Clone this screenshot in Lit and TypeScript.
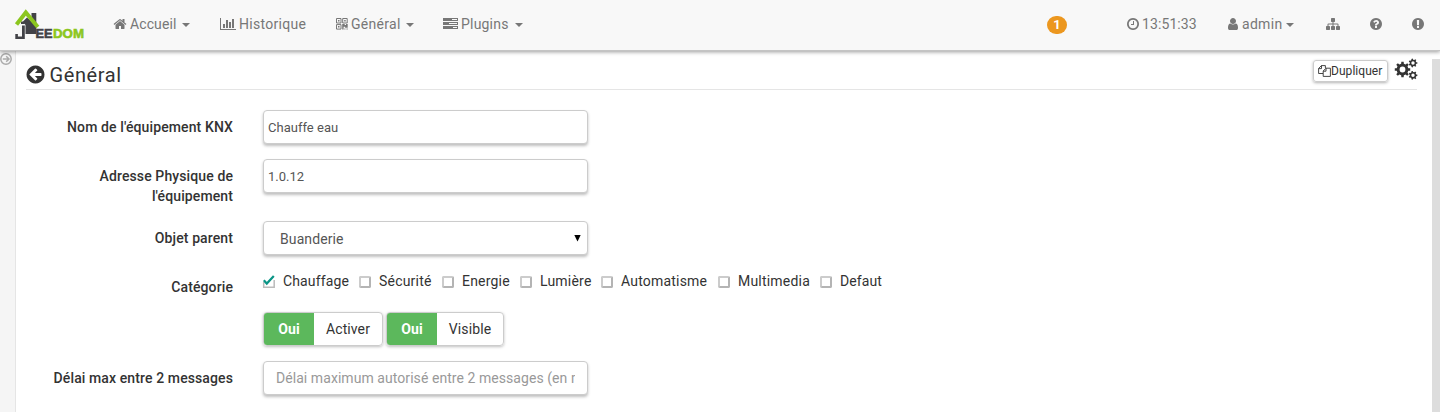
import { LitElement, html, css, svg } from "lit";
import { customElement } from "lit/decorators.js";

const DISC = "M1664 896q0 209-103 385.5t-279.5 279.5-385.5 103-385.5-103-279.5-279.5-103-385.5 103-385.5 279.5-279.5 385.5-103 385.5 103 279.5 279.5 103 385.5z";
const PATHS: Record<string, string> = {
  home: "M1472 992v480q0 26-19 45t-45 19h-384v-384h-256v384h-384q-26 0-45-19t-19-45v-480q0-1 .5-3t.5-3l575-474 575 474q1 2 1 6zm223-69l-62 74q-8 9-21 11h-3q-13 0-21-7l-692-577-692 577q-12 8-24 7-13-2-21-11l-62-74q-8-10-7-23.5t11-21.5l719-599q32-26 76-26t76 26l244 204v-195q0-14 9-23t23-9h192q14 0 23 9t9 23v408l219 182q10 8 11 21.5t-7 23.5z",
  chart: "M640 896v512h-256v-512h256zm384-512v1024h-256v-1024h256zm1024 1152v128h-2048v-1536h128v1408h1920zm-640-896v768h-256v-768h256zm384-384v1152h-256v-1152h256z",
  back: "M1408 960v-128q0-26-19-45t-45-19h-502l189-189q19-19 19-45t-19-45l-91-91q-18-18-45-18t-45 18l-362 362-91 91q-18 18-18 45t18 45l91 91 362 362q18 18 45 18t45-18l91-91q18-18 18-45t-18-45l-189-189h502q26 0 45-19t19-45z" + DISC,
  clock: "M1024 544v448q0 14-9 23t-23 9h-320q-14 0-23-9t-9-23v-64q0-14 9-23t23-9h224v-352q0-14 9-23t23-9h64q14 0 23 9t9 23zM1440 896q0-148-73-273t-198-198-273-73-273 73-198 198-73 273 73 273 198 198 273 73 273-73 198-198 73-273z" + DISC,
  user: "M1536 1399q0 109-62.5 187t-150.5 78h-854q-88 0-150.5-78t-62.5-187q0-85 8.5-160.5t31.5-152 58.5-131 94-89 134.5-34.5q131 128 313 128t313-128q76 0 134.5 34.5t94 89 58.5 131 31.5 152 8.5 160.5zm-256-887q0 159-112.5 271.5t-271.5 112.5-271.5-112.5-112.5-271.5 112.5-271.5 271.5-112.5 271.5 112.5 112.5 271.5z",
  sitemap: "M1792 1248v320q0 40-28 68t-68 28h-320q-40 0-68-28t-28-68v-320q0-40 28-68t68-28h96v-192h-512v192h96q40 0 68 28t28 68v320q0 40-28 68t-68 28h-320q-40 0-68-28t-28-68v-320q0-40 28-68t68-28h96v-192h-512v192h96q40 0 68 28t28 68v320q0 40-28 68t-68 28h-320q-40 0-68-28t-28-68v-320q0-40 28-68t68-28h96v-192q0-52 38-90t90-38h512v-192h-96q-40 0-68-28t-28-68v-320q0-40 28-68t68-28h320q40 0 68 28t28 68v320q0 40-28 68t-68 28h-96v192h512q52 0 90 38t38 90v192h96q40 0 68 28t28 68z",
  help: "M1024 1376v-192q0-14-9-23t-23-9h-192q-14 0-23 9t-9 23v192q0 14 9 23t23 9h192q14 0 23-9t9-23zm256-672q0-88-55.5-163t-138.5-116-170-41q-243 0-371 213-15 24 8 42l132 100q7 6 19 6 16 0 25-12 53-68 86-92 34-24 86-24 48 0 85.5 26t37.5 59q0 38-20 61t-68 45q-63 28-115.5 86.5t-52.5 125.5v36q0 14 9 23t23 9h192q14 0 23-9t9-23q0-19 21.5-49.5t54.5-49.5q32-18 49-28.5t46-35 44.5-48 28-60.5 12.5-81z" + DISC,
  alert: "M1024 1375v-190q0-14-9-23.5t-22-9.5h-192q-13 0-23 10t-10 23v190q0 13 10 23t23 10h192q13 0 22-9.5t9-23.5zm-2-344l18-621q0-12-10-18-10-8-24-8h-220q-14 0-24 8-10 6-10 18l17 621q0 10 10 17.5t24 7.5h185q14 0 23.5-7.5t10.5-17.5z" + DISC,
};

// Solid icon scaled so that 1792 units equal one em of `size` pixels.
const icon = (name: string, size = 14, units = 1792) => html`
  <svg width=${(size * units) / 1792} height=${size} viewBox="0 0 ${units} 1792">
    <path fill="currentColor" fill-rule="evenodd" d=${PATHS[name]}></path>
  </svg>`;

// Outline of a gear with a round hole.
const gear = (cx: number, cy: number, r: number, hole: number, teeth: number) => {
  const pts: string[] = [];
  const inner = r * 0.76;
  for (let i = 0; i < teeth; i++) {
    const a = (i * 2 * Math.PI) / teeth;
    const s = Math.PI / teeth;
    for (const [o, q] of [[-0.58, inner], [-0.38, r], [0.38, r], [0.58, inner]]) {
      pts.push(`${(cx + q * Math.cos(a + o * s)).toFixed(2)} ${(cy + q * Math.sin(a + o * s)).toFixed(2)}`);
    }
  }
  return svg`<path fill="currentColor" fill-rule="evenodd" d="M${pts.join("L")}ZM${cx - hole} ${cy}a${hole} ${hole} 0 1 0 ${2 * hole} 0a${hole} ${hole} 0 1 0 ${-2 * hole} 0Z"></path>`;
};

const qrcode = html`<svg width="12" height="12" viewBox="0 0 12 12" fill="none" stroke="currentColor">
  <path d="M.5.5h4.500v4.500h-4.500zM6.700.5h4.500v4.500h-4.500zM.5 6.600h4.500v4.500h-4.500z"></path>
  <path fill="currentColor" stroke="none" d="M2 2h1.500v1.500H2zM8.200 2h1.500v1.500H8.200zM2 8.100h1.500v1.500H2zM6.200 6.100h2.500v1h1.300v-1h1.700v3.700H9.100v-1H7.600v2.800H6.200zM8.400 10.600h1v1h-1zM10.500 10.600h1.200v1h-1.200z"></path></svg>`;
const server = html`<svg width="15" height="12" viewBox="0 0 15 12">
  <path fill="currentColor" fill-rule="evenodd" d="M0 0h15v3H0zM9 1h5v1H9zM0 4h15v3H0zM6 5h8v1H6zM0 8h15v3H0zM10 9h4v1h-4z"></path></svg>`;
const caret = html`<i class="caret"></i>`;

@customElement("app-root")
export class AppRoot extends LitElement {
  static styles = css`
    :host { display: block; height: 412px; overflow: hidden; background: #fff; color: #333;
      font: 14px/20px Roboto, sans-serif; letter-spacing: .1px; }
    * { box-sizing: border-box; }
    svg { display: block; flex: none; overflow: visible; }
    .nav { position: relative; z-index: 1; display: flex; height: 51px; padding-left: 15px; background: #f8f8f8;
      border-bottom: 1px solid #c4c4c4; box-shadow: 0 1px 4px rgba(0,0,0,.4); color: #777; }
    .logo { width: 83px; padding-top: 8px; }
    .item { display: flex; align-items: center; height: 48px; padding-left: 15px; white-space: nowrap; gap: 3px; }
    .w1 { width: 107px; } .w2 { width: 116px; letter-spacing: .28px; } .w3 { width: 107px; letter-spacing: .3px; } .w4 { width: 110px; letter-spacing: .2px; }
    .w3 .caret { margin-left: 2px; }
    .caret { width: 0; border: 4px solid transparent; border-top-color: currentColor; border-bottom: 0; margin: 1px 0 0 3px; }
    .right { display: flex; margin-left: auto; }
    .count { display: flex; align-items: center; justify-content: center; width: 20px; height: 18px; margin: 16px 44px 0 0;
      border-radius: 9px; background: #ec971f; color: #fff; font-size: 13px; font-weight: 700; }
    .r1 { width: 100px; gap: 2px; } .r2 { width: 100px; gap: 2px; letter-spacing: .3px; } .r2 .caret { margin-left: 2px; }
    .r3 { width: 43px; } .r4 { width: 42px; } .r5 { width: 44px; }
    .body { display: flex; height: 361px; }
    .side { width: 16px; background: #f5f5f5; border-right: 1px solid #e5e5e5; padding-top: 2px; color: #aaa; }
    .main { flex: 1; padding: 7px 15px 0 10px; }
    .track { width: 8px; margin-top: 8px; background: #ddd; }
    .head { display: flex; height: 32px; border-bottom: 1px solid #e5e5e5; }
    .title { display: flex; align-items: center; gap: 4px; height: 33px; margin-left: -1.500px; font-size: 20px; letter-spacing: .6px; }
    .tools { display: flex; margin-left: auto; gap: 7px; }
    .dup { display: flex; align-items: center; width: 75px; height: 22px; margin-top: 2px; padding-left: 4px;
      border: 1px solid #ccc; border-radius: 3px; box-shadow: 0 1px 3px rgba(0,0,0,.3); font-size: 12px; letter-spacing: .05px; }
    .form { display: flex; flex-direction: column; gap: 15px; padding-top: 20px; }
    .row { display: flex; gap: 30px; }
    .label { width: 207px; padding-top: 7px; text-align: right; font-weight: 500; color: #333; letter-spacing: .11px; }
    .narrow { padding-left: 60px; }
    .field { display: flex; align-items: center; width: 325px; height: 34px; padding: 0 12px; color: #555; background: #fff;
      border: 1px solid #ccc; border-radius: 4px; box-shadow: 0 2px 3px rgba(0,0,0,.25); white-space: nowrap; overflow: hidden; }
    .small { padding: 1px 4px 0; font-size: 13px; letter-spacing: .02px; }
    .select { justify-content: space-between; padding: 1px 6px 0 16px; }
    .select svg { margin-top: -1px; }
    .hint { color: #999; letter-spacing: .06px; }
    .clip { overflow: hidden; }
    .checks { display: flex; height: 22px; letter-spacing: .2px; }
    .check { display: flex; align-items: center; gap: 8px; white-space: nowrap; }
    .c1 { width: 96px; letter-spacing: .14px; } .c2 { width: 83px; } .c3 { width: 78px; } .c4 { width: 81px; } .c5 { width: 117px; } .c6 { width: 102px; }
    .c7 { letter-spacing: .1px; }
    .box { width: 12px; height: 12px; border: 2px solid #b4b4b4; border-top-color: #ccc; border-left-color: #ccc; border-radius: 2px; margin-top: 2px; }
    .toggles { display: flex; gap: 3px; }
    .toggle { display: flex; height: 34px; border: 1px solid #ccc; border-radius: 4px; box-shadow: 0 1px 3px rgba(0,0,0,.25); overflow: hidden; line-height: 32px; }
    .t1 { width: 120px; } .t2 { width: 118px; }
    .yes { width: 50px; background: #5cb85c; color: #fff; font-weight: 700; text-align: center; }
    .off { flex: 1; text-align: center; }
  `;

  render() {
    const cats = ["Chauffage", "Sécurité", "Energie", "Lumière", "Automatisme", "Multimedia", "Defaut"];
    return html`
      <div class="nav">
        <div class="logo">
          <svg width="70" height="33" viewBox="0 0 70 33">
            <path fill="#424247" d="M16.500 5h4.800v21h-4.800zM8 13.500l4-4 8 7v9.500h-9.500v-9z"></path>
            <path fill="#424247" d="M6 13.500h3.800v2.500H6zM7 17.500h2.800V31H.3v-5h2.600v2.400H7z"></path>
            <path fill="none" stroke="#8cc61e" stroke-width="4" d="M1.500 16.500L10.800 4.500 22.800 19"></path>
            <g font-family="Liberation Sans, sans-serif" font-weight="700" font-size="13" letter-spacing="0" stroke-width=".6">
              <text x="20.500" y="30.400" fill="#424247" stroke="#424247" textLength="17" lengthAdjust="spacingAndGlyphs">EE</text>
              <text x="38" y="30.400" fill="#8cc61e" stroke="#8cc61e" textLength="31" lengthAdjust="spacingAndGlyphs">DOM</text>
            </g>
          </svg>
        </div>
        <div class="item w1">${icon("home")}<span>Accueil</span>${caret}</div>
        <div class="item w2">${icon("chart", 14, 2048)}<span>Historique</span></div>
        <div class="item w3">${qrcode}<span>Général</span>${caret}</div>
        <div class="item w4">${server}<span>Plugins</span>${caret}</div>
        <div class="right">
          <div class="count">1</div>
          <div class="item r1">${icon("clock")}<span>13:51:33</span></div>
          <div class="item r2">${icon("user")}<span>admin</span>${caret}</div>
          <div class="item r3">${icon("sitemap")}</div>
          <div class="item r4">${icon("help")}</div>
          <div class="item r5">${icon("alert")}</div>
        </div>
      </div>
      <div class="body">
        <div class="side">
          <svg width="13" height="13" viewBox="0 0 13 13" fill="none" stroke="currentColor" stroke-width="1.500">
            <circle cx="6" cy="6" r="5.200"></circle><path d="M2.800 6h6M6.200 3.200l2.800 2.800-2.800 2.800"></path>
          </svg>
        </div>
        <div class="main">
          <div class="head">
            <div class="title">${icon("back", 21)}<span>Général</span></div>
            <div class="tools">
              <div class="dup">
                <svg width="13" height="12" viewBox="0 0 13 12" fill="none" stroke="currentColor" stroke-width=".9">
                  <path d="M5 8.500H.6V3.500L3.400.6H7.400V3M3.500.6v3H.6M5.200 11.400V6L8 3.200h4.400v8.200zM8 3.200v3H5.200"></path>
                </svg><span>Dupliquer</span>
              </div>
              <svg width="22" height="22" viewBox="0 0 22 22">${gear(7.5, 11.5, 7.8, 2.9, 8)}${gear(18, 5, 4.4, 1.7, 7)}${gear(18, 17.3, 4.4, 1.7, 7)}</svg>
            </div>
          </div>
          <div class="form">
            <div class="row"><div class="label">Nom de l'équipement KNX</div><div class="field small">Chauffe eau</div></div>
            <div class="row"><div class="label narrow">Adresse Physique de l'équipement</div><div class="field small">1.0.12</div></div>
            <div class="row"><div class="label">Objet parent</div><div class="field select"><span>Buanderie</span>
              <svg width="7" height="7" viewBox="0 0 7 7"><path d="M.3 0h6.400L3.500 6.500z"></path></svg></div></div>
            <div class="row"><div class="label">Catégorie</div><div class="checks">
              ${cats.map((c, i) => html`<div class="check c${i + 1}">${i
                ? html`<i class="box"></i>`
                : html`<svg width="12" height="14" viewBox="0 0 12 14"><path fill="none" stroke="#bbb" stroke-width="1.500" d="M.7 8v5.200h10.500V6"></path><path fill="none" stroke="#0b9586" stroke-width="2.200" d="M.8 6.300l3 3.300 7-7.500"></path></svg>`}<span>${c}</span></div>`)}
            </div></div>
            <div class="row"><div class="label"></div><div class="toggles">
              <div class="toggle t1"><div class="yes">Oui</div><div class="off">Activer</div></div>
              <div class="toggle t2"><div class="yes">Oui</div><div class="off">Visible</div></div>
            </div></div>
            <div class="row"><div class="label">Délai max entre 2 messages</div><div class="field hint"><span class="clip">Délai maximum autorisé entre 2 messages (en minutes)</span></div></div>
          </div>
        </div>
        <div class="track"></div>
      </div>`;
  }
}
